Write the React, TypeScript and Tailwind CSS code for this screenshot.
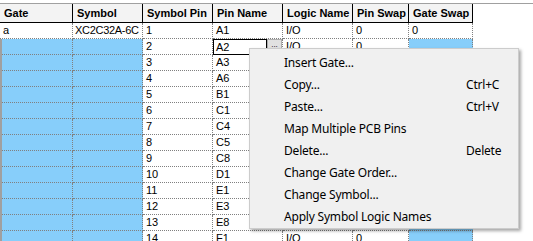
import React from "react";

const cols = [
  { name: "Gate", w: "w-[73px]" },
  { name: "Symbol", w: "w-[70px]" },
  { name: "Symbol Pin", w: "w-[70px]" },
  { name: "Pin Name", w: "w-[70px]" },
  { name: "Logic Name", w: "w-[70px]" },
  { name: "Pin Swap", w: "w-[56px]" },
  { name: "Gate Swap", w: "w-[64px]" },
];

const pins = ["A1", "A2", "A3", "A6", "B1", "C1", "C4", "C5", "C8", "D1", "E1", "E3", "E8", "F1"];

const menuItems = [
  { label: "Insert Gate...", key: "" },
  { label: "Copy...", key: "Ctrl+C" },
  { label: "Paste...", key: "Ctrl+V" },
  { label: "Map Multiple PCB Pins", key: "" },
  { label: "Delete...", key: "Delete" },
  { label: "Change Gate Order...", key: "" },
  { label: "Change Symbol...", key: "" },
  { label: "Apply Symbol Logic Names", key: "" },
];

const Cell = ({ w, blue, children }: { w: string; blue?: boolean; children?: React.ReactNode }) => (
  <div
    className={`${w} shrink-0 h-[16px] border-r border-b border-dotted border-[#808080] pl-[3px] leading-[15px] overflow-hidden whitespace-nowrap ${blue ? "bg-[#87cefa]" : "bg-white"}`}
  >
    {children}
  </div>
);

export default function App() {
  return (
    <div
      className="relative w-[533px] h-[241px] overflow-hidden bg-white text-black text-[11px]"
      style={{ fontFamily: '"Liberation Sans", Arial, sans-serif' }}
    >
      <div className="mt-[3px] border-t border-[#a0a0a0]">
        {/* header */}
        <div className="flex">
          <div className="flex border-b border-black bg-[#f3f3f3]">
            {cols.map((c) => (
              <div
                key={c.name}
                className={`${c.w} shrink-0 h-[18px] border-r border-black pl-[4px] font-bold leading-[18px] whitespace-nowrap`}
              >
                {c.name}
              </div>
            ))}
          </div>
        </div>

        {/* rows */}
        {pins.map((pin, i) => {
          const first = i === 0;
          return (
            <div key={pin} className="flex">
              <div className={`flex ${first ? "" : "border-l-2 border-[#a0a0a0]"}`}>
                <Cell w={first ? "w-[73px]" : "w-[71px]"} blue={!first}>
                  {first ? "a" : ""}
                </Cell>
                <Cell w="w-[70px]" blue={!first}>
                  <span className="-ml-[1px] tracking-[-0.3px]">{first ? "XC2C32A-6C" : ""}</span>
                </Cell>
                <Cell w="w-[70px]">{i + 1}</Cell>
                {i === 1 ? (
                  <div className="w-[70px] shrink-0 h-[16px] border-r border-b border-dotted border-[#808080] flex">
                    <div className="w-[54px] h-[16px] border border-black pl-[2px] leading-[14px]">{pin}</div>
                    <div className="w-[15px] h-[16px] bg-[#e1e1e1] border border-[#adadad] text-[8px] leading-[10px] text-center">
                      ...
                    </div>
                  </div>
                ) : (
                  <Cell w="w-[70px]">{pin}</Cell>
                )}
                <Cell w="w-[70px]">I/O</Cell>
                <Cell w="w-[56px]">0</Cell>
                <Cell w="w-[64px]" blue={!first}>
                  {first ? "0" : ""}
                </Cell>
              </div>
            </div>
          );
        })}
      </div>

      {/* context menu */}
      <div
        className="absolute left-[249px] top-[48px] w-[270px] h-[181px] bg-[#f0f0f0] border border-[#cccccc] pt-[3px] shadow-[2px_2px_3px_rgba(0,0,0,0.35)] text-[12px] text-black"
        style={{ fontFamily: '"Noto Sans", "Open Sans", sans-serif' }}
      >
        {menuItems.map((m) => (
          <div key={m.label} className="flex h-[22px] items-center whitespace-nowrap">
            <div className="w-[216px] pl-[34px] tracking-[-0.2px]">{m.label}</div>
            <div className="tracking-[-0.2px]">{m.key}</div>
          </div>
        ))}
      </div>
    </div>
  );
}
